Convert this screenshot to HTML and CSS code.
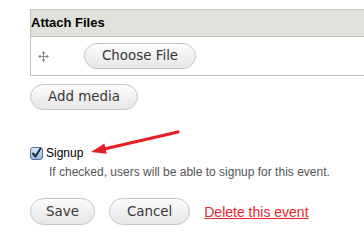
FILE: index.html
```html
<!DOCTYPE html>
<html>
<head>
<meta charset="utf-8">
<link rel="stylesheet" href="styles.css">
</head>
<body>
<div class="page">
  <div class="files">
    <div class="files-head">Attach Files</div>
    <div class="files-row">
      <svg class="move" width="11" height="11" viewBox="0 0 11 11">
        <path d="M5.5 1.5V9.5M1.5 5.5H9.5" stroke="#8a8a8a" stroke-width="1" fill="none"/>
        <path d="M5.5 0L3.5 2.5H7.5Z M5.5 11L3.5 8.5H7.5Z M0 5.5L2.5 3.5V7.5Z M11 5.5L8.5 3.5V7.5Z" fill="#8a8a8a"/>
      </svg>
      <button class="btn">Choose File</button>
    </div>
  </div>
  <button class="btn add">Add media</button>
  <div class="field">
    <label class="check">
      <svg class="box" width="13" height="13" viewBox="0 0 13 13">
        <defs>
          <linearGradient id="cb" x1="0" y1="0" x2="0" y2="1">
            <stop offset="0" stop-color="#e3eefb"/>
            <stop offset="1" stop-color="#8fb5e6"/>
          </linearGradient>
        </defs>
        <rect x="0.5" y="0.5" width="12" height="12" rx="2.5" fill="url(#cb)" stroke="#5b6f8f"/>
        <path d="M3 6.5L5.5 9.5L10.5 1.5" stroke="#1c2a40" stroke-width="2" fill="none" stroke-linecap="round" stroke-linejoin="round"/>
      </svg>
      <span>Signup</span>
    </label>
    <div class="desc">If checked, users will be able to signup for this event.</div>
  </div>
  <div class="actions">
    <button class="btn tall save">Save</button>
    <button class="btn tall">Cancel</button>
    <a class="delete" href="#">Delete this event</a>
  </div>
  <svg class="arrow" width="364" height="250" viewBox="0 0 364 250">
    <line x1="178" y1="132" x2="104" y2="149" stroke="#e41f26" stroke-width="3.2" stroke-linecap="round"/>
    <polygon points="91,152 106.7,153.8 104.4,143.6" fill="#e41f26"/>
  </svg>
</div>
</body>
</html>
```
FILE: styles.css
```css
html, body {
  margin: 0;
  padding: 0;
  background: #fff;
  overflow: hidden;
}
body {
  font-family: "Liberation Sans", Arial, sans-serif;
  color: #000;
}
.page {
  position: relative;
  width: 364px;
  height: 250px;
  padding: 9px 0 0 30px;
  box-sizing: border-box;
}
.files {
  width: 333px;
  border: 1px solid #c4c4bc;
  border-right: none;
}
.files-head {
  background: #e1e1dc;
  height: 26px;
  line-height: 26px;
  border-bottom: 1px solid #c4c4bc;
  font-weight: bold;
  font-size: 13px;
}
.files-row {
  height: 38px;
  display: flex;
  align-items: center;
}
.move {
  margin-left: 7px;
  margin-right: 35px;
  flex: none;
}
.btn {
  font-family: "DejaVu Sans", sans-serif;
  font-size: 13.4px;
  color: #383838;
  height: 26px;
  padding: 0 17px;
  border: 1px solid #c5c5c5;
  border-radius: 14px;
  background: linear-gradient(#fcfcfc, #e6e6e6);
  line-height: 24px;
  margin: 0;
  display: inline-block;
}
.add {
  margin-top: 8px;
  display: block;
}
.field {
  margin-top: 36px;
}
.check {
  display: flex;
  align-items: center;
  height: 15px;
  font-size: 12px;
  line-height: 15px;
}
.box {
  margin-right: 3px;
  flex: none;
}
.desc {
  margin: 4px 0 0 19px;
  font-size: 12px;
  line-height: 15px;
  color: #555;
}
.actions {
  margin-top: 18px;
  display: flex;
  align-items: center;
  gap: 14px;
}
.tall {
  height: 27px;
}
.save {
  padding: 0 15px;
}
.delete {
  color: #e8232b;
  font-size: 14px;
  text-decoration: underline;
}
.arrow {
  position: absolute;
  left: 0;
  top: 0;
  pointer-events: none;
}
```
